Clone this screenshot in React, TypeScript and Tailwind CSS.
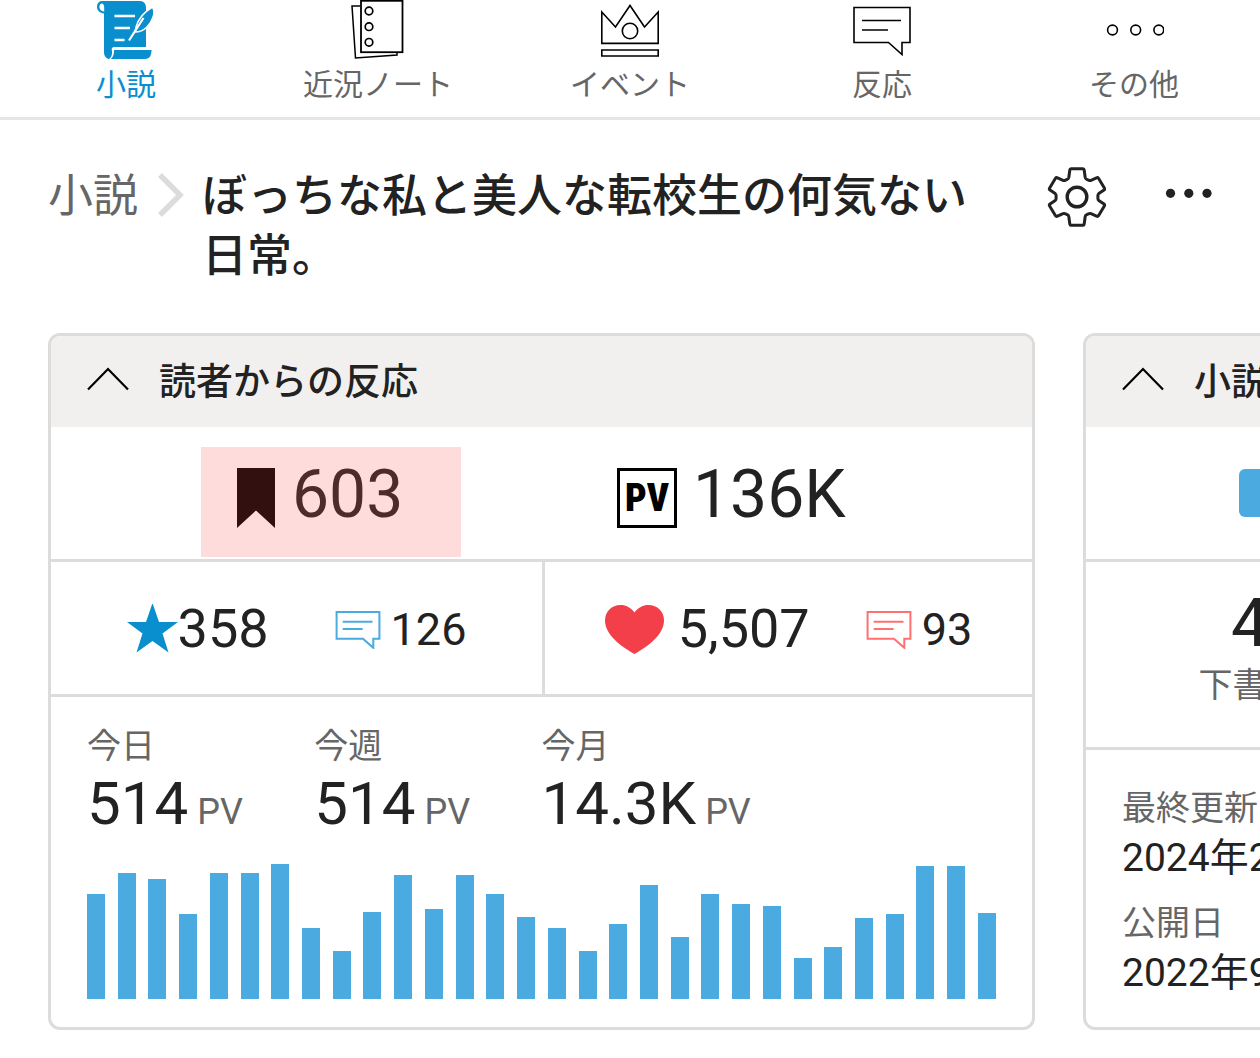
import type { ReactNode } from 'react';

const PV_BARS = [
  105, 126, 120, 85, 126, 126, 135, 71, 48, 87, 124, 90, 124, 105, 82,
  71, 48, 75, 114, 62, 105, 95, 93, 41, 52, 81, 85, 133, 133, 86,
];

const PERIODS = [
  { label: '今日', value: '514' },
  { label: '今週', value: '514' },
  { label: '今月', value: '14.3K' },
];

function NovelIcon() {
  return (
    <svg width="60" height="60" viewBox="0 0 60 60" aria-hidden="true">
      <path
        fill="#0a8fce"
        d="M6 1H44C48 1 50 4 50 8V47H19C15.500 47 15.500 49 16 51C16.500 55 15 57.500 13 59C10 58.500 8 56 8 52V13.500C4 13 1 10.500 1 7C1 3.500 3 1 6 1Z"
      />
      <path fill="#fff" d="M5.500 3.500C3.500 4 3.200 6 3.500 8C4 10 6 11.500 8.200 11.500V8C8.200 5 7.500 3.500 5.500 3.500Z" />
      <path fill="#0a8fce" d="M18 50H55.500C55.500 55 54 59 49 59H15C17.500 56.500 18.300 53 18 50Z" />
      <path
        fill="#0a8fce"
        stroke="#fff"
        strokeWidth="1.500"
        d="M39 32L40 27C42 20 48 12 56.500 7C60 13 56 22 50.500 27.500C47 31 43.500 32 39 32Z"
      />
      <path stroke="#fff" strokeWidth="2.200" fill="none" d="M33 40.500L47.500 18" />
      <path stroke="#fff" strokeWidth="2.600" fill="none" d="M18.500 16H39M18.500 28H34M18.500 40H28.500" />
    </svg>
  );
}

function NotesIcon() {
  return (
    <svg width="60" height="60" viewBox="0 0 60 60" fill="none" stroke="#000" aria-hidden="true">
      <path strokeWidth="1.500" d="M12 6H4L7.500 58L49 55V52" />
      <rect x="13" y="0.800" width="41.500" height="51.400" strokeWidth="1.800" />
      <circle cx="21" cy="11" r="3.800" strokeWidth="1.700" />
      <circle cx="21" cy="26.700" r="3.800" strokeWidth="1.700" />
      <circle cx="21" cy="42.300" r="3.800" strokeWidth="1.700" />
    </svg>
  );
}

function CrownIcon() {
  return (
    <svg width="60" height="60" viewBox="0 0 60 60" fill="none" stroke="#000" strokeWidth="1.600" aria-hidden="true">
      <path d="M1.800 12V43.400H58.200V12L44.500 27L30 5.500L15.500 27Z" />
      <circle cx="30" cy="31" r="7.700" />
      <path d="M1.800 50H58.200V56H1.800Z" />
    </svg>
  );
}

function CommentIcon({ className, stroke = 2 }: { className: string; stroke?: number }) {
  return (
    <svg viewBox="0 0 60 51" fill="none" stroke="currentColor" strokeWidth={stroke} className={className} aria-hidden="true">
      <path className="[vector-effect:non-scaling-stroke]" d="M2 2.500H58V37.500H50V49.500L36.500 37.500H2Z" />
      <path className="[vector-effect:non-scaling-stroke]" d="M10 15.500H49M10 25H36" />
    </svg>
  );
}

function MoreIcon() {
  return (
    <svg width="60" height="60" viewBox="0 0 60 60" fill="none" stroke="#000" strokeWidth="1.600" aria-hidden="true">
      <circle cx="8.500" cy="30" r="4.900" />
      <circle cx="31.700" cy="30" r="4.900" />
      <circle cx="54.800" cy="30" r="4.900" />
    </svg>
  );
}

function GearIcon() {
  return (
    <svg width="60" height="60" viewBox="-31 -30 60 60" fill="none" stroke="#222" strokeWidth="3" strokeLinejoin="round" aria-hidden="true">
      <path d="M-6 -28.300H6Q7 -28.300 7.200 -27L8.200 -19.500Q8.500 -18.200 9.800 -17.700L12 -16.700Q13 -16.200 14 -16.700L19.500 -19.200Q20.800 -19.700 21.500 -18.700L27.500 -8.700Q28 -7.700 27 -6.900L21.800 -3.400Q20.900 -2.600 20.900 -1.500V1.500Q20.900 2.600 21.800 3.400L27 6.900Q28 7.700 27.500 8.700L21.500 18.700Q20.800 19.700 19.500 19.200L14 16.700Q13 16.200 12 16.700L9.800 17.700Q8.500 18.200 8.200 19.500L7.200 27Q7 28.300 6 28.300H-6Q-7 28.300 -7.200 27L-8.200 19.500Q-8.500 18.200 -9.800 17.700L-12 16.700Q-13 16.200 -14 16.700L-19.500 19.200Q-20.800 19.700 -21.500 18.700L-27.500 8.700Q-28 7.700 -27 6.900L-21.800 3.400Q-20.900 2.600 -20.900 1.500V-1.500Q-20.900 -2.600 -21.800 -3.400L-27 -6.900Q-28 -7.700 -27.500 -8.700L-21.500 -18.700Q-20.800 -19.700 -19.500 -19.200L-14 -16.700Q-13 -16.200 -12 -16.700L-9.800 -17.700Q-8.500 -18.200 -8.200 -19.500L-7.200 -27Q-7 -28.300 -6 -28.300Z" />
      <circle r="9.800" strokeWidth="3.400" />
    </svg>
  );
}

type NavItem = { label: string; icon: ReactNode; active?: boolean };

const NAV_ITEMS: NavItem[] = [
  { label: '小説', icon: <NovelIcon />, active: true },
  { label: '近況ノート', icon: <NotesIcon /> },
  { label: 'イベント', icon: <CrownIcon /> },
  { label: '反応', icon: <CommentIcon stroke={1.6} className="mt-[5px] mb-1 h-[51px] w-[60px] text-black" /> },
  { label: 'その他', icon: <MoreIcon /> },
];

function Card({ title, children }: { title: string; children: ReactNode }) {
  return (
    <section className="flex w-[calc(100%-177px)] shrink-0 flex-col overflow-hidden rounded-xl border-[3px] border-[#dcdcdc] bg-white">
      <h2>
        <button type="button" className="flex h-[91px] w-full items-center gap-[30px] bg-[#f2f0ef] px-9 pt-[2px] text-left text-[37px] leading-[60px] font-medium">
          <svg width="42" height="32" viewBox="0 0 42 32" fill="none" stroke="#000" strokeWidth="2.200" aria-hidden="true">
            <path d="M1 22.500L21 2L41 22.500" />
          </svg>
          {title}
        </button>
      </h2>
      {children}
    </section>
  );
}

function App() {
  return (
    <div className="min-h-screen overflow-x-hidden bg-white pb-7 font-['Roboto','Noto_Sans_CJK_JP',sans-serif] text-[#222]" lang="ja">
      {/* Navigation */}
      <nav className="grid grid-cols-5 border-b-[3px] border-[#e6e6e6] pb-2">
        {NAV_ITEMS.map((item) => (
          <a
            key={item.label}
            href="#"
            className={`flex flex-col items-center text-[30px] leading-[49px] ${item.active ? 'text-[#0a8fce]' : 'text-[#666]'}`}
          >
            {item.icon}
            {item.label}
          </a>
        ))}
      </nav>

      {/* Title */}
      <header className="flex items-start px-12 pt-[47px] text-[45px] leading-[60px]">
        <a href="#" className="shrink-0 text-[#666]">小説</a>
        <svg width="26" height="60" viewBox="0 0 26 60" className="mr-[18px] ml-5 shrink-0" fill="none" stroke="#dcdcdc" strokeWidth="5.500" aria-hidden="true">
          <path d="M2 8L22 28L2 48" />
        </svg>
        <h1 className="min-w-0 flex-1 font-medium">ぼっちな私と美人な転校生の何気ない日常。</h1>
        <button type="button" aria-label="設定" className="ml-[54px] shrink-0">
          <GearIcon />
        </button>
        <button type="button" aria-label="メニュー" className="ml-[58px] shrink-0">
          <svg width="48" height="60" viewBox="0 0 48 60" fill="#222" aria-hidden="true">
            <circle cx="6.500" cy="26.300" r="4.600" />
            <circle cx="24.800" cy="26.300" r="4.600" />
            <circle cx="43" cy="26.300" r="4.600" />
          </svg>
        </button>
      </header>

      {/* Cards */}
      <main className="flex gap-12 px-12 pt-[46px]">
        <Card title="読者からの反応">
          <div className="flex h-[135px] items-stretch gap-[156px] border-b-[3px] border-[#dcdcdc] pl-[150px] text-[66px] leading-none">
            <a href="#" className="relative flex w-[260px] items-center gap-4 pt-1 pl-[35px]">
              <svg width="40" height="60" viewBox="0 0 40 60" className="mt-[6px]" aria-hidden="true">
                <path d="M1 0H39V60L20 42.500L1 60Z" />
              </svg>
              603
              <span className="absolute inset-x-0 top-5 bottom-[2px] bg-[#ff5050]/20" />
            </a>
            <a href="#" className="flex items-center gap-4 pt-1">
              <span className="mt-[6px] flex size-[60px] items-center justify-center border-[3px] border-black font-['Roboto_Condensed','Open_Sans_Condensed',Roboto,sans-serif] text-[38px] font-black text-black">
                PV
              </span>
              136K
            </a>
          </div>

          <div className="grid grid-cols-[494fr_487fr] border-b-[3px] border-[#dcdcdc] text-[54px] leading-none">
            <div className="flex h-[132px] items-center justify-center gap-[66px] border-r-[3px] border-[#dcdcdc] pt-[2px]">
              <a href="#" className="flex items-center">
                <svg width="51" height="51" viewBox="0 0 51 51" fill="#0a8fce" aria-hidden="true">
                  <path d="M25.500 -1L32 18H51L35.500 29.500L41.500 48.500L25.500 37L9.500 48.500L15.500 29.500L0 18H19Z" />
                </svg>
                358
              </a>
              <a href="#" className="flex items-center gap-[10px] text-[45px]">
                <CommentIcon className="h-[39px] w-[46px] text-[#4baae0]" />
                126
              </a>
            </div>
            <div className="flex h-[132px] items-center justify-center gap-14 pt-[2px]">
              <a href="#" className="flex items-center gap-[14px]">
                <svg width="59" height="49" viewBox="0 0 59 49" fill="#f23f49" aria-hidden="true">
                  <path d="M29.500 7.500C33 2.500 38 0 43.500 0C52.500 0 59 6.500 59 15.500C59 29 44 41 29.500 49C15 41 0 29 0 15.500C0 6.500 6.500 0 15.500 0C21 0 26 2.500 29.500 7.500Z" />
                </svg>
                5,507
              </a>
              <a href="#" className="flex items-center gap-[10px] text-[45px]">
                <CommentIcon className="h-[39px] w-[46px] text-[#ff7070]" />
                93
              </a>
            </div>
          </div>

          <div className="px-9 pt-6 pb-7">
            <dl className="grid grid-cols-4">
              {PERIODS.map((period) => (
                <div key={period.label}>
                  <dt className="text-[34px] leading-[50px] text-[#666]">{period.label}</dt>
                  <dd className="text-[60px] leading-[66px] whitespace-nowrap">
                    {period.value}
                    <span className="ml-[9px] text-[36px] text-[#666]">PV</span>
                  </dd>
                </div>
              ))}
            </dl>
            <div className="mt-[19px] flex h-[135px] items-end justify-between">
              {PV_BARS.map((height, i) => (
                <div key={i} className="w-[18px] bg-[#4baae0]" style={{ height }} />
              ))}
            </div>
          </div>
        </Card>

        <Card title="小説情報">
          <div className="flex h-[135px] items-center border-b-[3px] border-[#dcdcdc] px-[153px]">
            <button type="button" className="h-12 w-full rounded-md bg-[#4baae0] text-[34px] leading-none text-white">
              執筆
            </button>
          </div>
          <div className="grid h-[188px] grid-cols-3 border-b-[3px] border-[#dcdcdc] pt-[26px] text-center">
            <div>
              <div className="text-[66px] leading-[72px]">4</div>
              <div className="text-[34px] leading-[51px] text-[#666]">下書き</div>
            </div>
          </div>
          <dl className="px-9 pt-[33px]">
            <dt className="text-[34px] leading-[50px] text-[#666]">最終更新</dt>
            <dd className="mb-[15px] text-[39px] leading-[50px]">2024年2月</dd>
            <dt className="text-[34px] leading-[50px] text-[#666]">公開日</dt>
            <dd className="text-[39px] leading-[50px]">2022年9月</dd>
          </dl>
        </Card>
      </main>
    </div>
  );
}

export default App;
